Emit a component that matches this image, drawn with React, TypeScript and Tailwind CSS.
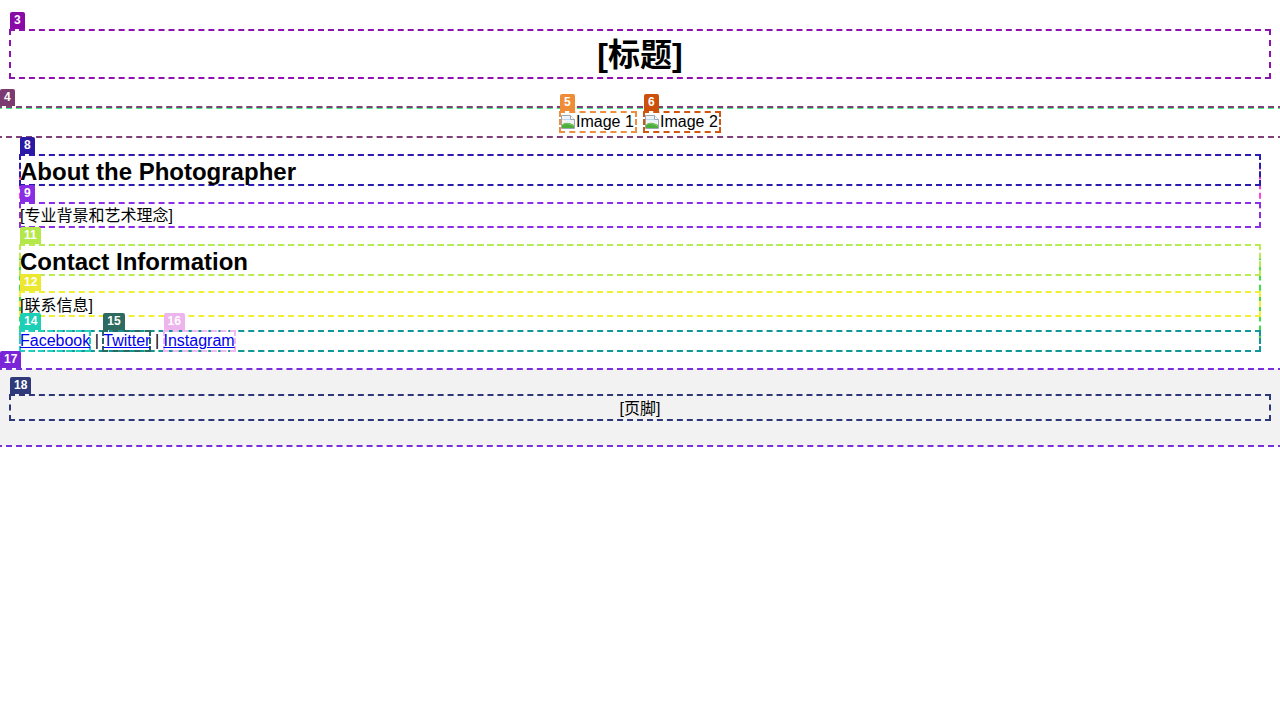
import type { ReactNode } from "react";

const font = "font-['Liberation_Sans','Noto_Sans_CJK_SC',sans-serif]";

interface BoxProps {
  line: string;
  badge?: string;
  label?: string;
  inset?: string;
  className?: string;
  children?: ReactNode;
}

// dashed debug outline + numbered tag sitting on top of it
function Box({ line, badge, label, inset = "-inset-px", className = "", children }: BoxProps) {
  return (
    <div className={`relative ${className}`}>
      <div className={`pointer-events-none absolute border-2 border-dashed ${inset} ${line}`} />
      {label && (
        <span
          className={`absolute left-0 -top-[18px] z-10 h-[17px] rounded-t-[2px] px-[4px] text-[12px] font-bold leading-[17px] text-white ${badge}`}
        >
          {label}
        </span>
      )}
      <div className="relative">{children}</div>
    </div>
  );
}

function BrokenImage() {
  return (
    <svg width="16" height="16" viewBox="0 0 16 16" className="shrink-0">
      <path d="M1.5 1.5h9l4 4v9h-13z" fill="#eef3f8" stroke="#9aa6b2" />
      <path d="M10.5 1.5v4h4" fill="#fff" stroke="#9aa6b2" />
      <path d="M2 5h8v1H2z" fill="#bcd6ee" />
      <path d="M2 14V11c3-3 6-3 12 0v3z" fill="#4caf3c" />
      <path d="M2 11c3-2 6-2 12 1" fill="none" stroke="#86c86a" />
    </svg>
  );
}

function Picture({ alt, line, badge, label }: { alt: string; line: string; badge: string; label: string }) {
  return (
    <Box line={line} badge={badge} label={label} className="h-[20px] w-[76px]">
      <div className="flex h-[20px] items-center">
        <BrokenImage />
        <span className="text-[16px] leading-[20px]">{alt}</span>
      </div>
    </Box>
  );
}

function Link({ text, line, badge, label }: { text: string; line: string; badge: string; label: string }) {
  return (
    <Box line={line} badge={badge} label={label} className="inline-block">
      <a href="#" className="text-[#0000ee] underline">
        {text}
      </a>
    </Box>
  );
}

export default function App() {
  return (
    <div className={`min-h-[720px] bg-white text-black ${font}`}>
      <Box
        line="border-[#44ee88]"
        inset="-left-[4px] -right-[4px] -top-[4px] -bottom-[2px]"
        className="px-[10px] pt-[30px] pb-[29px]"
      >
        <Box line="border-[#8e12b0]" badge="bg-[#8a0aa8]" label="3">
          <h1 className="h-[48px] pt-[1px] text-center text-[32px] font-bold leading-[48px]">[标题]</h1>
        </Box>
      </Box>

      <Box
        line="border-[#7e4076]"
        badge="bg-[#7b3a70]"
        label="4"
        inset="-left-[4px] -right-[4px] -inset-y-px"
        className="py-[5px]"
      >
        <div className="flex justify-center gap-[8px]">
          <Picture alt="Image 1" line="border-[#ec9040]" badge="bg-[#ee8c38]" label="5" />
          <Picture alt="Image 2" line="border-[#cf560f]" badge="bg-[#cc4f0a]" label="6" />
        </div>
      </Box>

      <div className="px-[20px]">
        <Box line="border-[#ff44dd]" className="mt-[18px]">
          <Box line="border-[#2a1cb0]" badge="bg-[#2b1aa6]" label="8">
            <h2 className="h-[30px] pt-[2px] text-[24px] font-bold leading-[30px]">About the Photographer</h2>
          </Box>
          <Box line="border-[#8a2ee8]" badge="bg-[#8a2ee6]" label="9" className="mt-[18px]">
            <p className="h-[24px] pt-[1px] text-[16px] leading-[24px]">[专业背景和艺术理念]</p>
          </Box>
        </Box>

        <Box line="border-[#3ee048]" className="mt-[18px]">
          <Box line="border-[#b8ec50]" badge="bg-[#b4e84a]" label="11">
            <h2 className="h-[30px] pt-[2px] text-[24px] font-bold leading-[30px]">Contact Information</h2>
          </Box>
          <Box line="border-[#f2f032]" badge="bg-[#ece830]" label="12" className="mt-[17px]">
            <p className="h-[24px] pt-[2px] text-[16px] leading-[24px]">[联系信息]</p>
          </Box>
          <Box line="border-[#139699]" className="mt-[15px] h-[20px] text-[16px] leading-[20px]">
            <Link text="Facebook" line="border-[#22d0bc]" badge="bg-[#1ccfb6]" label="14" /> |{" "}
            <Link text="Twitter" line="border-[#2c6a60]" badge="bg-[#2d6b61]" label="15" /> |{" "}
            <Link text="Instagram" line="border-[#f0baf0]" badge="bg-[#eeb4ee]" label="16" />
          </Box>
        </Box>
      </div>

      <Box
        line="border-[#7a2edc]"
        badge="bg-[#7a26d8]"
        label="17"
        inset="-left-[4px] -right-[4px] -inset-y-px"
        className="mt-[18px] bg-[#f2f2f2] px-[10px] pt-[26px] pb-[26px]"
      >
        <Box line="border-[#2e3878]" badge="bg-[#2e3a7a]" label="18">
          <p className="h-[25px] pt-[1px] text-center text-[16px] leading-[25px]">[页脚]</p>
        </Box>
      </Box>
    </div>
  );
}
